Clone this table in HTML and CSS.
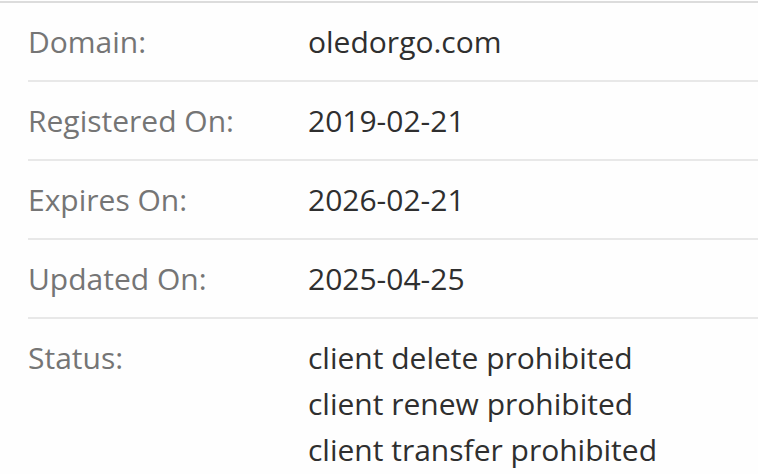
FILE: index.html
```html
<!DOCTYPE html>
<html>
<head>
<meta charset="utf-8">
<link rel="stylesheet" href="styles.css">
</head>
<body>
<div class="panel">
  <div class="list">
    <div class="row"><div class="label">Domain:</div><div class="value">oledorgo.com</div></div>
    <div class="row"><div class="label">Registered On:</div><div class="value">2019-02-21</div></div>
    <div class="row"><div class="label">Expires On:</div><div class="value">2026-02-21</div></div>
    <div class="row"><div class="label">Updated On:</div><div class="value">2025-04-25</div></div>
    <div class="row"><div class="label">Status:</div><div class="value">client delete prohibited<br>client renew prohibited<br>client transfer prohibited</div></div>
  </div>
</div>
</body>
</html>
```
FILE: styles.css
```css
html, body {
  margin: 0;
  padding: 0;
  background: #fefefe;
}
.panel {
  margin-top: 1px;
  border-top: 2px solid #dcdcdc;
  font-family: "Open Sans", sans-serif;
  font-size: 30px;
  line-height: 46px;
}
.list {
  padding-left: 28px;
}
.row {
  display: grid;
  grid-template-columns: 280px 1fr;
  padding: 16px 0 15px;
  border-bottom: 2px solid #e8e8e8;
}
.label {
  color: #757575;
}
.value {
  color: #2f2f2f;
}
```
